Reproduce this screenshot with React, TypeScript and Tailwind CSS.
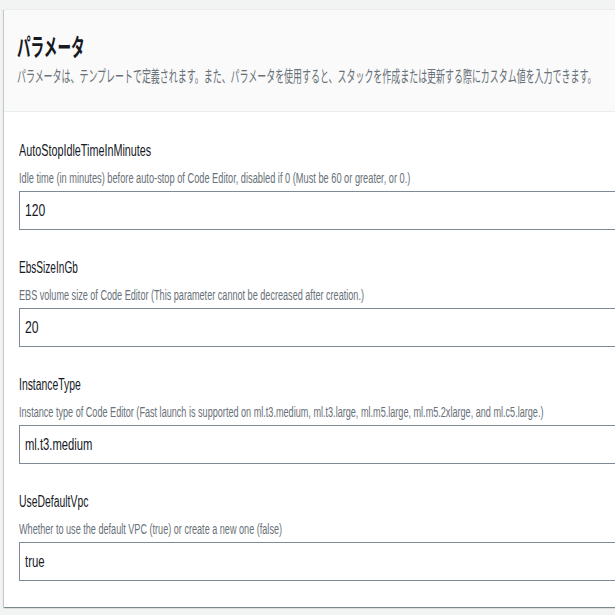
import React from "react";

type FieldProps = {
  label: string;
  desc: string;
  value: string;
  ls: string;
  ds: string;
  vs: string;
};

const latin = "font-['Liberation_Sans',sans-serif]";

function Field({ label, desc, value, ls, ds, vs }: FieldProps) {
  return (
    <div className="flex flex-col">
      <div
        className={`h-[20px] leading-[20px] text-[16px] text-[#16191f] whitespace-nowrap origin-left ${latin} ${ls}`}
      >
        {label}
      </div>
      <div
        className={`mt-[8px] h-[18px] leading-[18px] text-[14px] text-[#687078] whitespace-nowrap origin-left ${latin} ${ds}`}
      >
        {desc}
      </div>
      <div className="mt-[4px] h-[39px] border border-[#7f8a94] bg-white pl-[5px] pt-[1px] flex items-center">
        <span
          className={`block whitespace-nowrap origin-left text-[17px] leading-[20px] text-[#16191f] ${latin} ${vs}`}
        >
          {value}
        </span>
      </div>
    </div>
  );
}

export default function App() {
  return (
    <div className="w-[615px] h-[615px] overflow-hidden bg-[#f2f3f3] pt-[9px] pl-[4px]">
      <div className="w-[720px] bg-white border-t border-[#eaeded] shadow-[0_1px_1px_0_rgba(0,28,36,0.3),1px_1px_1px_0_rgba(0,28,36,0.15),-1px_1px_1px_0_rgba(0,28,36,0.15)]">
        <div className="bg-[#fafafa] border-b border-[#eaeded] px-[15px] pt-[21px] pb-[26px]">
          <h2 className="-ml-[2px] h-[30px] leading-[30px] text-[24px] font-bold text-[#16191f] whitespace-nowrap origin-left scale-x-[0.567] font-['Noto_Sans_CJK_JP',sans-serif]">
            パラメータ
          </h2>
          <p className="-ml-[2px] mt-[4px] h-[20px] leading-[20px] text-[16px] text-[#687078] whitespace-nowrap origin-left scale-x-[0.56] font-['Noto_Sans_CJK_JP',sans-serif]">
            パラメータは、テンプレートで定義されます。また、パラメータを使用すると、スタックを作成または更新する際にカスタム値を入力できます。
          </p>
        </div>
        <div className="flex flex-col gap-[28.3px] px-[15px] pt-[28.5px] pb-[26px]">
          <Field
            label="AutoStopIdleTimeInMinutes"
            desc="Idle time (in minutes) before auto-stop of Code Editor, disabled if 0 (Must be 60 or greater, or 0.)"
            value="120"
            ls="scale-x-[0.675]"
            ds="scale-x-[0.66]"
            vs="scale-x-[0.715]"
          />
          <Field
            label="EbsSizeInGb"
            desc="EBS volume size of Code Editor (This parameter cannot be decreased after creation.)"
            value="20"
            ls="scale-x-[0.63]"
            ds="scale-x-[0.65]"
            vs="scale-x-[0.715]"
          />
          <Field
            label="InstanceType"
            desc="Instance type of Code Editor (Fast launch is supported on ml.t3.medium, ml.t3.large, ml.m5.large, ml.m5.2xlarge, and ml.c5.large.)"
            value="ml.t3.medium"
            ls="scale-x-[0.65]"
            ds="scale-x-[0.65]"
            vs="scale-x-[0.66]"
          />
          <Field
            label="UseDefaultVpc"
            desc="Whether to use the default VPC (true) or create a new one (false)"
            value="true"
            ls="scale-x-[0.65]"
            ds="scale-x-[0.65]"
            vs="scale-x-[0.67]"
          />
        </div>
      </div>
    </div>
  );
}
